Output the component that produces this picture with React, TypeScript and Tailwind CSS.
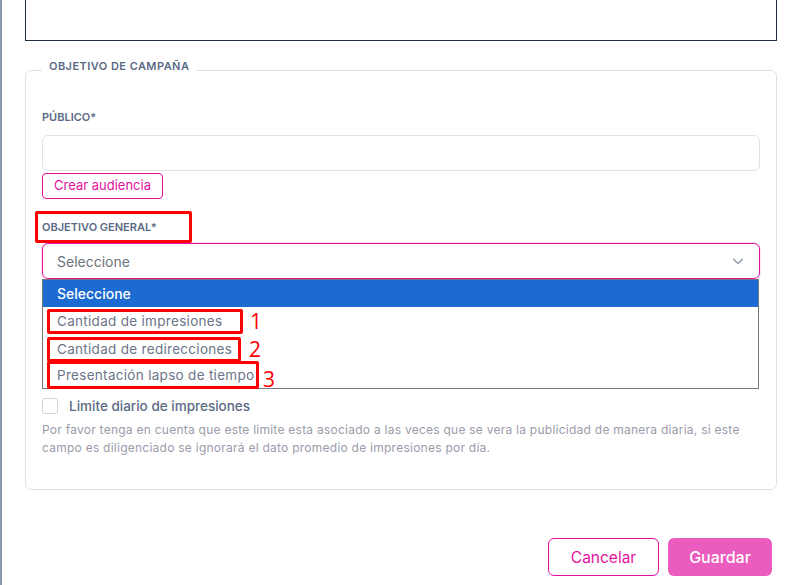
import React from "react";

const font = { fontFamily: "Inter, 'Noto Sans', sans-serif" };
const numFont = { fontFamily: "'Open Sans', sans-serif", fontWeight: 400 };

function Item({ text, n, boxClass, numClass }: { text: string; n: string; boxClass: string; numClass: string }) {
  return (
    <div className="h-[28px] flex items-center pl-[4px]">
      <span className={`inline-flex items-center border-[3px] border-[#ff0000] rounded-[2px] pl-[7px] ${boxClass}`}>
        <span className="text-[13.5px] text-[#6b7488] tracking-[0.3px]">{text}</span>
      </span>
      <span className={`text-[21px] leading-none text-[#ff0000] ${numClass}`} style={numFont}>{n}</span>
    </div>
  );
}

export default function App() {
  return (
    <div className="w-[790px] h-[585px] overflow-hidden bg-white border-l-2 border-[#8a98ab] flex flex-col" style={font}>
      <div className="pl-[23px] pr-[13px]">
        <div className="h-[41px] border-x border-b border-[#1f2d3d]" />
        <fieldset className="mt-[17px] border border-[#dfe3e8] rounded-md px-4 pb-[32px]">
          <legend className="ml-0 px-[7px] pb-[8px] text-[11px] leading-[16px] font-semibold text-[#5a6a85] tracking-[0.45px]">
            OBJETIVO DE CAMPAÑA
          </legend>
          <div className="mt-[27px] text-[11px] leading-[16px] font-semibold text-[#5a6a85]">PÚBLICO*</div>
          <div className="mt-[10px] h-[36px] border border-[#dfe3e8] rounded-md" />
          <button className="mt-[2px] h-[26px] w-[121px] border border-[#e3119e] rounded-[4px] text-[13px] text-[#e3119e] flex items-center justify-center">
            Crear audiencia
          </button>
          <div className="mt-[12px] -ml-[7px] w-[157px] h-[32px] border-[3px] border-[#ff0000] rounded-[2px] pl-[4px] flex items-center">
            <span className="text-[11px] leading-[16px] font-semibold text-[#5a6a85]">OBJETIVO GENERAL*</span>
          </div>
          <div className="h-[36px] border border-[#e3119e] rounded-md flex items-center justify-between pl-[14px] pr-[14px] shadow-[0_0_0_1px_rgba(227,17,158,0.12)]">
            <span className="text-[14px] text-[#6c757d]">Seleccione</span>
            <svg width="14" height="14" viewBox="0 0 16 16" fill="none" stroke="#8a94a6" strokeWidth="1.6" strokeLinecap="round" strokeLinejoin="round">
              <path d="M3 6l5 5 5-5" />
            </svg>
          </div>
          <div className="mr-[1px] border border-[#767676]">
            <div className="h-[27px] bg-[#1b6bd3] flex items-center pl-[14px]">
              <span className="text-[14px] font-medium text-white">Seleccione</span>
            </div>
            <Item text="Cantidad de impresiones" n="1" boxClass="w-[196px] h-[25px]" numClass="ml-[7px]" />
            <Item text="Cantidad de redirecciones" n="2" boxClass="w-[194px] h-[25px]" numClass="ml-[8px]" />
            <div className="h-[25px] flex items-start pl-[4px]">
              <span className="inline-flex items-center border-[3px] border-[#ff0000] rounded-[2px] pl-[7px] w-[212px] h-[28px] -mt-[2px]">
                <span className="text-[13.5px] text-[#6b7488] tracking-[0.3px]">Presentación lapso de tiempo</span>
              </span>
              <span className="text-[21px] leading-none text-[#ff0000] ml-[4px] mt-[6px]" style={numFont}>3</span>
            </div>
          </div>
          <div className="mt-[7px] flex items-center">
            <span className="w-[16px] h-[16px] border border-[#ced4da] rounded-[3px]" />
            <span className="ml-[11px] text-[13.5px] font-medium text-[#5a6a85]">Limite diario de impresiones</span>
          </div>
          <p className="mt-[5px] text-[12px] leading-[18px] text-[#9a9cab] tracking-[0.25px]">
            Por favor tenga en cuenta que este limite esta asociado a las veces que se vera la publicidad de manera diaria, si este campo es diligenciado se ignorará el dato promedio de impresiones por día.
          </p>
        </fieldset>
      </div>
      <div className="mt-[48px] pr-[18px] flex justify-end gap-[9px]">
        <button className="w-[111px] h-[38px] border border-[#e3119e] rounded-md text-[15.5px] text-[#e3119e] bg-white">Cancelar</button>
        <button className="w-[104px] h-[38px] rounded-md text-[16px] font-medium text-white bg-[#ea5cbe]">Guardar</button>
      </div>
    </div>
  );
}
